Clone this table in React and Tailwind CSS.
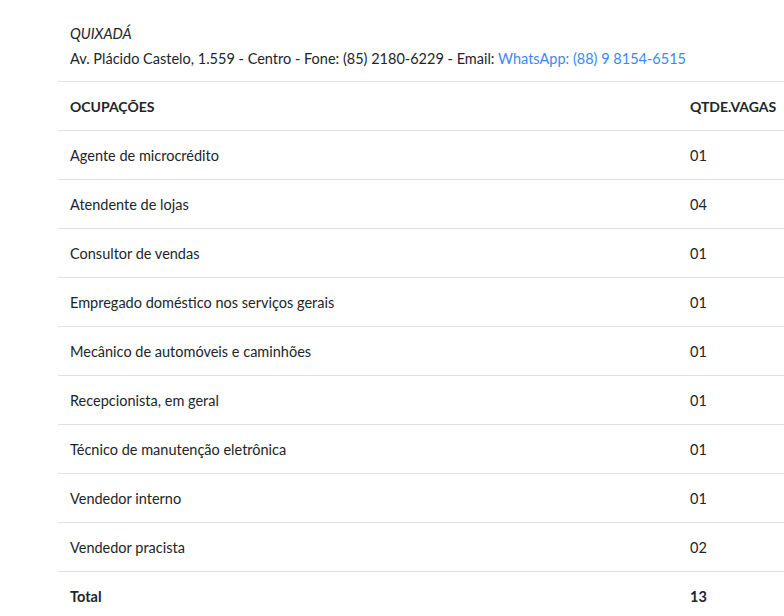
import React from "react";

const vagas = [
  ["Agente de microcrédito", "01"],
  ["Atendente de lojas", "04"],
  ["Consultor de vendas", "01"],
  ["Empregado doméstico nos serviços gerais", "01"],
  ["Mecânico de automóveis e caminhões", "01"],
  ["Recepcionista, em geral", "01"],
  ["Técnico de manutenção eletrônica", "01"],
  ["Vendedor interno", "01"],
  ["Vendedor pracista", "02"],
];

const App = () => {
  return (
    <div
      className="w-[784px] h-[616px] overflow-hidden bg-white text-[#212529] text-[14.5px] leading-6 pt-[9px] pl-[58px]"
      style={{ fontFamily: "Lato, 'Liberation Sans', sans-serif" }}
    >
      <table className="w-[760px] border-collapse">
        <tbody>
          <tr>
            <td colSpan={2} className="px-3 pt-3 pb-3">
              <div className="italic leading-[25px]">QUIXADÁ</div>
              <div className="leading-[25px] mb-[-2px]">
                Av. Plácido Castelo, 1.559 - Centro - Fone: (85) 2180-6229 - Email:{" "}
                <a className="text-[#3b88f5]">WhatsApp: (88) 9 8154-6515</a>
              </div>
            </td>
          </tr>
          <tr className="border-t border-[#dee2e6]">
            <th className="px-3 pt-[13px] pb-[11px] text-left font-bold text-[14px] w-[620px]">OCUPAÇÕES</th>
            <th className="px-3 pt-[13px] pb-[11px] text-left font-bold text-[14px]">QTDE.VAGAS</th>
          </tr>
          {vagas.map(([nome, qtd], index) => (
            <tr key={index} className="border-t border-[#dee2e6]">
              <td className="px-3 pt-[13px] pb-[11px]">{nome}</td>
              <td className="px-3 pt-[13px] pb-[11px]">{qtd}</td>
            </tr>
          ))}
          <tr className="border-t border-[#dee2e6]">
            <td className="px-3 pt-[13px] pb-[11px] font-bold">Total</td>
            <td className="px-3 pt-[13px] pb-[11px] font-bold">13</td>
          </tr>
        </tbody>
      </table>
    </div>
  );
};

export default App;
